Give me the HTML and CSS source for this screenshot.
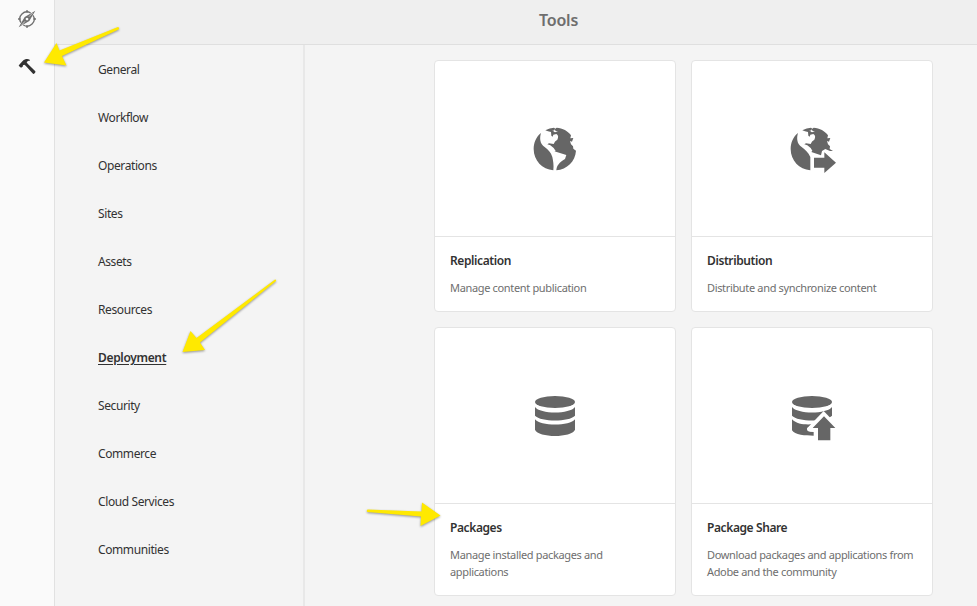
FILE: index.html
```html
<!DOCTYPE html>
<html lang="en">
<head>
<meta charset="utf-8">
<title>Tools</title>
<link rel="stylesheet" href="styles.css">
</head>
<body>
<div class="app">
  <aside class="rail">
    <svg class="rail-icon" viewBox="0 0 60 60" aria-label="Navigation">
      <g fill="none" stroke="#707070" stroke-width="4">
        <path d="M41 12A21 21 0 0 0 12 41M19 48A21 21 0 0 0 48 19"/>
        <path d="M30 3v8M30 49v8M3 30h8M49 30h8"/>
      </g>
      <path fill="#707070" fill-rule="evenodd" d="M55 5L37 36L5 55L23 24ZM30 26a4 4 0 1 0 .1 0Z"/>
      <path fill="none" stroke="#fafafa" stroke-width="2" d="M13 49L24 37M36 23L47 12"/>
    </svg>
    <svg class="rail-icon" viewBox="0 0 60 60" aria-label="Tools">
      <path fill="#323232" d="M8 22L17 12C23 6 32 5 38 8L39 11C33 11 30 13 29 16L32 20L55 43C57 46 51 53 48 50L26 26L22 23L18 25L17 29L12 32L5 26Z"/>
    </svg>
  </aside>
  <div class="workspace">
    <header class="topbar"><h1>Tools</h1></header>
    <div class="content">
      <nav class="menu">
        <a class="menu-item">General</a>
        <a class="menu-item">Workflow</a>
        <a class="menu-item">Operations</a>
        <a class="menu-item">Sites</a>
        <a class="menu-item">Assets</a>
        <a class="menu-item">Resources</a>
        <a class="menu-item active">Deployment</a>
        <a class="menu-item">Security</a>
        <a class="menu-item">Commerce</a>
        <a class="menu-item">Cloud Services</a>
        <a class="menu-item">Communities</a>
      </nav>
      <main class="cards">
        <article class="card">
          <div class="media">
            <svg viewBox="0 0 210 210">
              <g fill="#666">
                <path d="M63 54C48 66 41 84 41 102C41 137 67 163 100 166C102 150 99 136 97 126C93 112 84 104 74 96C60 87 58 70 63 54Z"/>
                <path d="M76 46Q89 39 102 38L106 41L110 38C128 39 144 48 153 61L151 70L160 69L156 80L150 78L153 88L159 94L160 101L168 107C166 139 141 163 109 166C110 152 118 142 135 132L139 120L103 109L107 108L101 99L91 91L82 88L87 85L101 87Q104 78 112 74Q118 62 109 57L100 59L98 65L94 62L93 51L84 49Z"/>
              </g>
              <path fill="#fff" d="M97 45L102 47L104 43L107 48L114 49L105 52L102 50Z"/>
            </svg>
          </div>
          <div class="info"><h2>Replication</h2><p>Manage content publication</p></div>
        </article>
        <article class="card">
          <div class="media">
            <svg viewBox="-9 0 210 210">
              <g fill="#666">
                <path d="M54 54C39 66 32 84 32 102C32 137 58 163 91 166V126C85 112 75 104 65 96C51 87 49 70 54 54Z"/>
                <path d="M67 46Q80 39 93 38L97 41L101 38C119 39 135 48 144 61L142 70L151 69L147 80L141 78L144 88L150 94L149 102L159 108L150 108L136 102L126 108L123 121L94 111L97 107L92 99L82 91L73 88L78 85L92 87Q95 78 103 74Q109 62 100 57L91 59L89 65L85 62L84 51L75 49Z"/>
                <path d="M102 128H133V112L168 143L133 174V158H102Z"/>
              </g>
              <path fill="#fff" d="M88 45L93 47L95 43L98 48L105 49L96 52L93 50Z"/>
            </svg>
          </div>
          <div class="info"><h2>Distribution</h2><p>Distribute and synchronize content</p></div>
        </article>
        <article class="card">
          <div class="media">
            <svg viewBox="0 -9 210 210">
              <g fill="#666">
                <ellipse cx="105" cy="51" rx="60" ry="18"/>
                <path d="M45 66C60 88 150 88 165 66V92C148 111 62 111 45 92Z"/>
                <path d="M45 103C60 124 150 124 165 103V134C155 159 55 159 45 134Z"/>
              </g>
            </svg>
          </div>
          <div class="info"><h2>Packages</h2><p>Manage installed packages and applications</p></div>
        </article>
        <article class="card">
          <div class="media">
            <svg viewBox="-9 -9 210 210">
              <g fill="#666">
                <ellipse cx="96" cy="51" rx="60" ry="18"/>
                <path d="M36 66C51 88 141 88 156 66V92C139 111 53 111 36 92Z"/>
                <path d="M36 103C51 119 76 119 98 118L81 130Q82 140 101 141V152C77 152 43 150 36 136Z"/>
              </g>
              <path fill="#fff" d="M131 78L168 116V140H90Q78 138 82 129Z"/>
              <path fill="#666" d="M142 79L156 70V92Z"/>
              <path fill="#666" d="M132 94L166 129H151V166H114V129H98Z"/>
            </svg>
          </div>
          <div class="info"><h2>Package Share</h2><p>Download packages and applications from Adobe and the community</p></div>
        </article>
      </main>
    </div>
  </div>
  <svg class="arrows" viewBox="0 0 977 606">
    <g fill="#ffe900">
      <path d="M44 62.500L56.500 43L59.500 50.500L118 27Q120 28 118.500 29.500L62 56L66.500 65.500Z"/>
      <path d="M182.500 352L190.500 331L196.500 338L275 279.500Q277 280 275.500 281.500L200 342.500L205 350Z"/>
      <path d="M440.500 515.500L422 502.500L421.500 511.500L367.500 509.500Q366 511 367.500 512L421 516.500L420.500 526Z"/>
    </g>
  </svg>
</div>
</body>
</html>
```
FILE: styles.css
```css
* { box-sizing: border-box; }
body {
  margin: 0;
  font-family: "Noto Sans", "Open Sans", sans-serif;
  background: #f4f4f4;
  color: #323232;
}
.app {
  position: relative;
  display: flex;
  width: 977px;
  height: 606px;
  overflow: hidden;
}
.rail {
  width: 55px;
  flex: none;
  display: flex;
  flex-direction: column;
  align-items: center;
  gap: 28px;
  padding-top: 9px;
  background: #fafafa;
  border-right: 1px solid #e1e1e1;
}
.rail-icon { width: 20px; height: 20px; flex: none; }
.workspace { flex: 1; display: flex; flex-direction: column; min-width: 0; }
.topbar {
  height: 45px;
  flex: none;
  padding-right: 1px;
  padding-left: 86px;
  background: #efefef;
  border-bottom: 1px solid #dfdfdf;
  text-align: center;
}
.topbar h1 {
  margin: 0;
  font-size: 16px;
  line-height: 40px;
  font-weight: 600;
  letter-spacing: -0.2px;
  color: #6e6e6e;
}
.content { flex: 1; display: flex; min-height: 0; }
.menu {
  width: 250px;
  flex: none;
  display: flex;
  flex-direction: column;
  padding: 1px 0 0 43px;
  border-right: 2px solid #e8e8e8;
}
.menu-item {
  height: 48px;
  flex: none;
  align-self: flex-start;
  line-height: 48px;
  font-size: 12px;
  letter-spacing: -0.4px;
}
.active {
  font-weight: 600;
  letter-spacing: -0.33px;
  text-decoration: underline;
  text-underline-offset: 2px;
}
.cards {
  display: grid;
  grid-template-columns: 242px 242px;
  grid-template-rows: 252px 269px;
  gap: 15px;
  padding: 15px 0 0 129px;
}
.card {
  background: #fff;
  border: 1px solid #e4e4e4;
  border-radius: 4px;
}
.media { height: 176px; padding-top: 54px; border-bottom: 1px solid #e4e4e4; }
.media svg { display: block; width: 70px; height: 70px; margin: 0 auto; }
.info { padding: 14px 15px 0; }
.info h2 {
  margin: 0;
  font-size: 12px;
  line-height: 20px;
  font-weight: 600;
  letter-spacing: -0.4px;
}
.info p {
  margin: 8px 0 0;
  font-size: 11px;
  line-height: 17px;
  letter-spacing: -0.34px;
  color: #6e6e6e;
}
.arrows {
  position: absolute;
  inset: 0;
  width: 977px;
  height: 606px;
  pointer-events: none;
  filter: drop-shadow(0 1px 1px rgba(0, 0, 0, 0.4));
}
```
